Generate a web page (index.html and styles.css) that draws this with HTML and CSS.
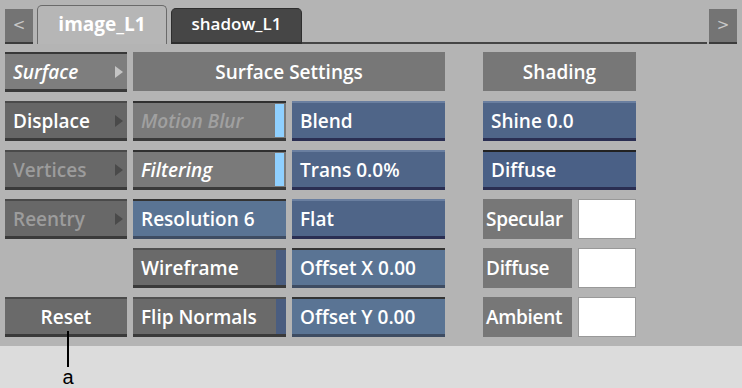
FILE: index.html
```html
<!DOCTYPE html>
<html lang="en">
<head>
    <meta charset="UTF-8">
    <title>Surface Settings</title>
    <link rel="stylesheet" href="styles.css">
</head>
<body>
    <div class="panel">
        <!-- Tabs -->
        <div class="tabbar">
            <button class="nav">&lt;</button>
            <div class="tab active">image_L1</div>
            <div class="tab">shadow_L1</div>
            <div class="tab-fill"></div>
            <button class="nav">&gt;</button>
        </div>

        <!-- Settings grid -->
        <div class="grid">
            <div class="btn menu selected"><span>Surface</span><i class="arrow"></i></div>
            <div class="header wide">Surface Settings</div>
            <div class="header c4">Shading</div>

            <div class="btn menu"><span>Displace</span><i class="arrow"></i></div>
            <div class="btn toggle disabled"><span>Motion Blur</span><i class="led"></i></div>
            <div class="btn blue">Blend</div>
            <div class="btn blue c4">Shine 0.0</div>

            <div class="btn menu dim"><span>Vertices</span><i class="arrow"></i></div>
            <div class="btn toggle"><span>Filtering</span><i class="led"></i></div>
            <div class="btn blue">Trans 0.0%</div>
            <div class="btn blue dark c4">Diffuse</div>

            <div class="btn menu dim"><span>Reentry</span><i class="arrow"></i></div>
            <div class="btn blue light">Resolution 6</div>
            <div class="btn blue">Flat</div>
            <div class="swatch-row c4"><div class="label">Specular</div><div class="swatch"></div></div>

            <div class="empty"></div>
            <div class="btn switch"><span>Wireframe</span><i class="strip"></i></div>
            <div class="btn blue light">Offset X 0.00</div>
            <div class="swatch-row c4"><div class="label">Diffuse</div><div class="swatch"></div></div>

            <div class="btn plain reset">Reset</div>
            <div class="btn switch"><span>Flip Normals</span><i class="strip"></i></div>
            <div class="btn blue light">Offset Y 0.00</div>
            <div class="swatch-row c4"><div class="label">Ambient</div><div class="swatch"></div></div>
        </div>
    </div>

    <!-- Callout -->
    <div class="callout">
        <div class="callout-line"></div>
        <div class="callout-label">a</div>
    </div>
</body>
</html>
```

FILE: styles.css
```css
body {
    margin: 0;
    background-color: #dcdcdc;
    font-family: "Open Sans", "DejaVu Sans", sans-serif;
    width: 742px;
    height: 388px;
    position: relative;
    overflow: hidden;
}
.panel {
    background-color: #b4b4b4;
    height: 346px;
    box-sizing: border-box;
    padding: 5px 5px 0 5px;
}
/* Tabs */
.tabbar {
    display: flex;
    align-items: flex-end;
    height: 39px;
    gap: 4px;
}
.nav {
    width: 28px;
    height: 35px;
    margin: 0;
    padding: 0 0 2px 0;
    border: none;
    background-color: #747474;
    border-bottom: 2px solid #3c3c3c;
    color: #c8c8c8;
    font-family: "DejaVu Sans", sans-serif;
    font-size: 15px;
}
.nav:last-child {
    margin-left: 2px;
}
.tab {
    width: 131px;
    height: 36px;
    box-sizing: border-box;
    border-radius: 5px 5px 0 0;
    color: #fff;
    font-size: 17px;
    font-weight: 600;
    display: flex;
    align-items: center;
    justify-content: center;
    padding-bottom: 4px;
    background-color: #464646;
    border: 1px solid #2e2e2e;
    border-bottom: 2px solid #2e2e2e;
}
.tab.active {
    width: 130px;
    height: 39px;
    background-color: #b6b6b6;
    border: 1px solid #6a6a6a;
    border-bottom: none;
    font-size: 19px;
    font-weight: 700;
    padding-bottom: 2px;
}
.tab-fill {
    flex: 1;
    align-self: stretch;
    border-bottom: 2px solid #454545;
    margin: 0 -4px;
}
/* Grid */
.grid {
    display: grid;
    grid-template-columns: 122px 153px 153px 26px 153px;
    grid-template-rows: repeat(6, 40px);
    column-gap: 6px;
    row-gap: 9px;
    margin-top: 8px;
}
.c4 {
    grid-column: 5;
}
.header {
    background-color: #777;
    color: #fff;
    font-size: 19px;
    font-weight: 600;
    display: flex;
    align-items: center;
    justify-content: center;
    margin-bottom: 1px;
}
.header.wide {
    grid-column: span 2;
}
.btn {
    box-sizing: border-box;
    display: flex;
    align-items: center;
    padding-left: 8px;
    color: #fff;
    font-size: 19px;
    font-weight: 600;
    border-top: 2px solid #4a4a4a;
    border-bottom: 3px solid #3a3a3a;
    position: relative;
    white-space: nowrap;
}
.btn span {
    flex: 1;
}
.menu {
    background-color: #666;
    padding-right: 4px;
}
.menu.selected {
    background-color: #7e7e7e;
    border-top-color: #383838;
    font-style: italic;
}
.menu.dim {
    color: #9c9c9c;
    background-color: #686868;
}
.arrow {
    width: 0;
    height: 0;
    border-top: 6px solid transparent;
    border-bottom: 6px solid transparent;
    border-left: 8px solid #4a4a4a;
}
.menu.selected .arrow {
    border-left-color: #c4c4c4;
}
.toggle {
    background-color: #7a7a7a;
    font-style: italic;
    padding-right: 2px;
    border-top-color: #303030;
}
.toggle.disabled {
    color: #a0a0a0;
}
.led {
    width: 9px;
    align-self: stretch;
    margin: 1px 0;
    background-color: #8fd0ff;
}
.switch {
    background-color: #6a6a6a;
    padding-right: 0;
    border-top-color: #505050;
}
.strip {
    width: 10px;
    align-self: stretch;
    background-color: #4a5d80;
}
.blue {
    background-color: #4f6588;
    border-top: 2px solid #6a7fa0;
    border-bottom: 3px solid #2a2e52;
}
.blue.light {
    background-color: #5a7494;
    border-top-color: #333;
    border-bottom-color: #3e4c62;
}
.blue.dark {
    background-color: #4a6086;
    border-top-color: #222;
    border-bottom-color: #2a2e52;
}
.plain {
    background-color: #6a6a6a;
    justify-content: center;
    padding-left: 0;
}
.swatch-row {
    display: flex;
    gap: 6px;
}
.label {
    width: 89px;
    background-color: #777;
    color: #fff;
    font-size: 19px;
    font-weight: 600;
    display: flex;
    align-items: center;
    padding-left: 3px;
    box-sizing: border-box;
    white-space: nowrap;
    letter-spacing: -0.3px;
}
.swatch {
    width: 58px;
    background-color: #fff;
    border: 1px solid #999;
    box-sizing: border-box;
}
/* Callout */
.callout {
    position: absolute;
    left: 58px;
    top: 331px;
    width: 20px;
    display: flex;
    flex-direction: column;
    align-items: center;
}
.callout-line {
    width: 2px;
    height: 36px;
    background-color: #000;
}
.callout-label {
    font-family: "Liberation Sans", Arial, sans-serif;
    font-size: 20px;
    line-height: 20px;
    color: #000;
}
```
